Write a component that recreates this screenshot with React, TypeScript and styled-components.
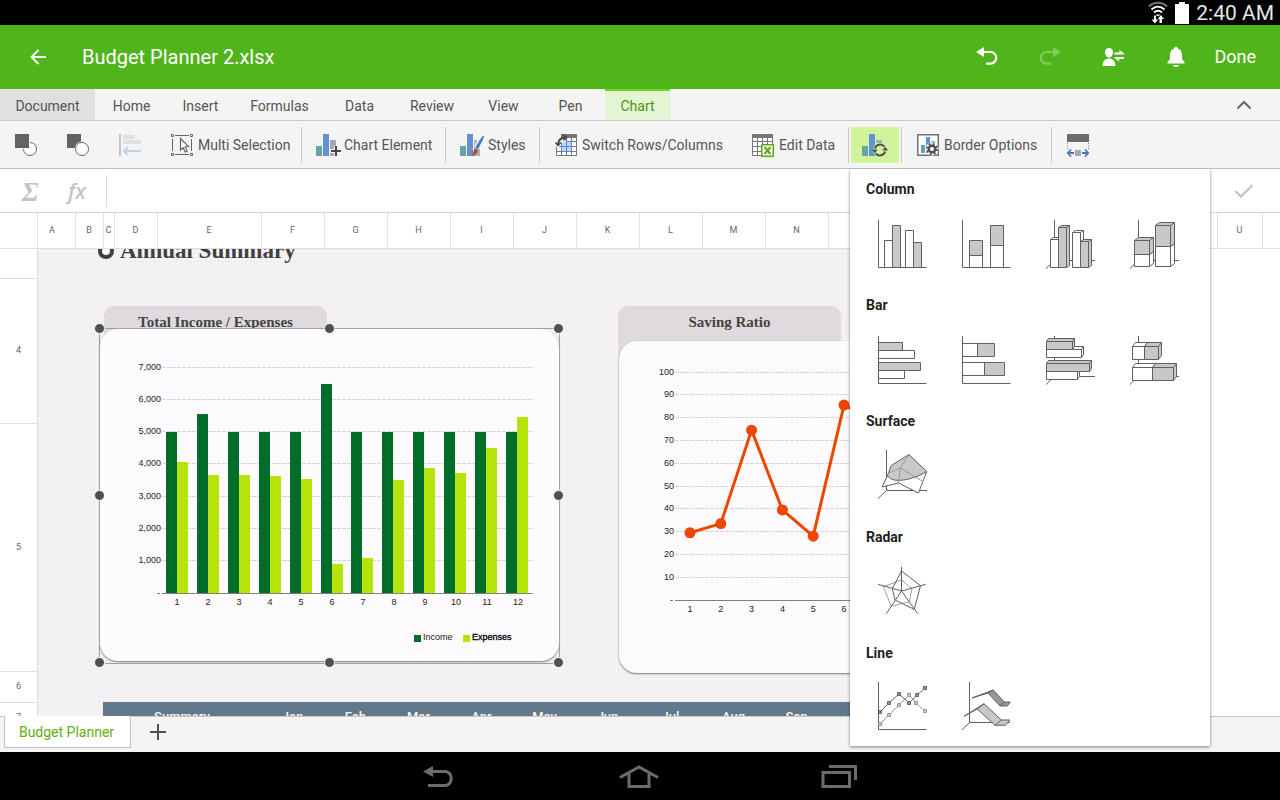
import React from 'react';
import styled, { createGlobalStyle, css } from 'styled-components';

const GlobalStyle = createGlobalStyle`
  *, *::before, *::after { box-sizing: border-box; }
  body {
    margin: 0;
    font-family: Roboto, "Liberation Sans", sans-serif;
    font-size: 14px;
    color: #555;
    background: #fff;
  }
  button {
    font: inherit;
    color: inherit;
    border: 0;
    padding: 0;
    background: none;
    cursor: pointer;
  }
  svg { display: block; flex: none; }
`;

/* ---------- frame ---------- */

const Page = styled.div`
  display: flex;
  flex-direction: column;
  height: 100vh;
  overflow: hidden;
`;

const StatusBar = styled.div`
  flex: none;
  display: flex;
  align-items: center;
  justify-content: flex-end;
  gap: 7px;
  height: 25px;
  padding-right: 6px;
  background: #000;
  color: #e6e6e6;
  font-size: 21px;
  line-height: 24px;
`;

const AppBar = styled.header`
  flex: none;
  display: flex;
  align-items: center;
  height: 64px;
  padding-right: 24px;
  background: #50b41b;
  color: #fff;
`;

const BackButton = styled.button`
  display: grid;
  place-items: center;
  width: 76px;
  height: 64px;
`;

const FileName = styled.h1`
  flex: 1;
  margin: 0;
  padding-left: 6px;
  font-size: 20px;
  line-height: 24px;
  font-weight: 400;
`;

const AppAction = styled.button`
  display: grid;
  place-items: center;
  width: 63px;
  height: 64px;
  &:disabled { opacity: 0.3; }
`;

const DoneButton = styled.button`
  padding-left: 7px;
  font-size: 18px;
  line-height: 24px;
`;

/* ---------- ribbon ---------- */

const TabBar = styled.nav`
  flex: none;
  display: flex;
  height: 32px;
  background: #f4f4f4;
  border-bottom: 1px solid #c8c8c8;
`;

const Tab = styled.button<{ $width: number; $state?: 'pressed' | 'active' }>`
  width: ${(p) => p.$width}px;
  padding-top: 2px;
  line-height: 28px;
  ${(p) => p.$state === 'pressed' && css`background: #e0e0e0;`}
  ${(p) =>
    p.$state === 'active' &&
    css`
      background: #e4f5d6;
      color: #4c960c;
      box-shadow: inset 0 2px #74d42c;
    `}
`;

const CollapseButton = styled.button`
  display: grid;
  place-items: center;
  width: 72px;
  margin-left: auto;
`;

const ToolBar = styled.div`
  flex: none;
  display: flex;
  align-items: center;
  height: 48px;
  background: #f4f4f4;
  border-bottom: 1px solid #c0c0c0;
`;

const ToolButton = styled.button<{ $width: number }>`
  display: flex;
  align-items: center;
  gap: 2px;
  width: ${(p) => p.$width}px;
  height: 36px;
  padding-left: 14px;
  white-space: nowrap;
`;

const ToolIconButton = styled.button<{ $active?: boolean }>`
  display: grid;
  place-items: center;
  width: ${(p) => (p.$active ? 48 : 52)}px;
  height: 36px;
  background: ${(p) => (p.$active ? '#d1f49a' : 'none')};
`;

const Separator = styled.div`
  width: 1px;
  height: 36px;
  background: #c8c8c8;
`;

const MenuAnchor = styled.div`
  position: relative;
  margin: 0 2px;
`;

const Menu = styled.div`
  position: absolute;
  z-index: 5;
  top: 42px;
  left: -1px;
  width: 360px;
  max-height: 577px;
  overflow: hidden;
  background: #fff;
  box-shadow: 0 1px 3px rgba(0, 0, 0, 0.5);
  clip-path: inset(0 -6px -6px -6px);
`;

const MenuSection = styled.section`
  padding: 0 12px 2px;
`;

const MenuTitle = styled.h2`
  margin: 0;
  padding-left: 4px;
  font-size: 14px;
  line-height: 40px;
  font-weight: 700;
  color: #222;
`;

const MenuGrid = styled.div`
  display: grid;
  grid-template-columns: repeat(4, 84px);
`;

const ChartTypeButton = styled.button`
  display: grid;
  place-items: center;
  height: 74px;
`;

/* ---------- formula bar ---------- */

const FormulaBar = styled.div`
  flex: none;
  display: flex;
  align-items: center;
  height: 44px;
  border-bottom: 1px solid #d8d8d8;
  color: #c4c4c4;
`;

const SumButton = styled.button`
  width: 60px;
  padding-top: 2px;
  font-family: "Liberation Serif", serif;
  font-size: 27px;
  line-height: 40px;
  font-style: italic;
  font-weight: 700;
`;

const FxButton = styled.button`
  width: 34px;
  font-family: "Open Sans", "Noto Sans", sans-serif;
  font-size: 21px;
  line-height: 40px;
  font-weight: 600;
  font-style: italic;
`;

const FormulaInput = styled.input`
  flex: 1;
  height: 32px;
  margin-left: 12px;
  padding: 0 8px;
  border: 0;
  border-left: 1px solid #d8d8d8;
  outline: 0;
  font: inherit;
  color: #333;
`;

const ConfirmButton = styled.button`
  display: grid;
  place-items: center;
  width: 72px;
`;

/* ---------- sheet ---------- */

const ColumnHeaders = styled.div`
  flex: none;
  display: flex;
  height: 36px;
  overflow: hidden;
  border-bottom: 1px solid #e0dfe0;
  font-size: 9px;
  line-height: 35px;
  color: #666;
`;

const Corner = styled.div`
  flex: none;
  width: 38px;
  border-right: 1px solid #e0dfe0;
  background: #fff;
  z-index: 1;
`;

const ColumnStrip = styled.div`
  display: flex;
  margin-left: -8px;
`;

const ColumnCell = styled.div<{ $width: number }>`
  flex: none;
  width: ${(p) => p.$width}px;
  padding-right: 1px;
  border-right: 1px solid #e0dfe0;
  text-align: center;
`;

const SheetBody = styled.div`
  flex: 1;
  display: flex;
  min-height: 0;
  overflow: hidden;
`;

const RowHeaders = styled.div`
  flex: none;
  width: 38px;
  border-right: 1px solid #e0dfe0;
  font-size: 9px;
  color: #666;
`;

const RowCell = styled.div<{ $height: number }>`
  display: grid;
  place-items: center;
  height: ${(p) => p.$height}px;
  padding-bottom: 2px;
  border-bottom: 1px solid #e0dfe0;
`;

const Dashboard = styled.main`
  flex: 1;
  overflow: hidden;
  padding-left: 62px;
  background-color: #f6f4f6;
  background-image:
    repeating-linear-gradient(90deg, #eeeced 0 1px, transparent 1px 4px),
    repeating-linear-gradient(#eeeced 0 1px, transparent 1px 4px);
`;

const BlankArea = styled.div`
  flex: none;
  width: 70px;
`;

const SummaryTitle = styled.h2`
  display: flex;
  align-items: center;
  gap: 6px;
  height: 73px;
  margin: -16px 0 0;
  padding-bottom: 38px;
  font-family: "Liberation Serif", serif;
  font-size: 23px;
  line-height: 28px;
  font-weight: 700;
  white-space: nowrap;
  color: #404040;
`;

const Ring = styled.span`
  width: 16px;
  height: 16px;
  margin-left: -2px;
  border: 4px solid #404040;
  border-radius: 50%;
  background: #fff;
`;

const Cards = styled.div`
  display: flex;
  gap: 60px;
`;

const CardColumn = styled.section`
  flex: none;
  width: 459px;
`;

const CardTab = styled.h3<{ $inset: number }>`
  width: 223px;
  height: 50px;
  margin: 0 0 0 ${(p) => p.$inset}px;
  padding-top: 6px;
  border-radius: 10px 10px 0 0;
  background: #dedadd;
  font-family: "Liberation Serif", serif;
  font-size: 15px;
  line-height: 20px;
  font-weight: 700;
  text-align: center;
  color: #444;
`;

const Card = styled.div<{ $overlap: number }>`
  position: relative;
  height: 332px;
  margin-top: -${(p) => p.$overlap}px;
  border-radius: 18px;
  background: #fefbfe;
  box-shadow: 0 1px 2px rgba(0, 0, 0, 0.5);
`;

const Selection = styled.div`
  position: absolute;
  inset: -1px -1px -3px -1px;
  border: 1px solid #a0a0a0;
`;

const Handle = styled.span<{ $x: number; $y: number }>`
  position: absolute;
  left: ${(p) => p.$x}%;
  top: ${(p) => p.$y}%;
  width: 11px;
  height: 11px;
  margin: -6px;
  border: 1px solid #fff;
  border-radius: 50%;
  background: #505050;
`;

const MonthTable = styled.table`
  table-layout: fixed;
  width: 914px;
  margin: 29px 0 0 3px;
  border-collapse: collapse;
  background: #62788c;
  color: #fff8e6;
  font-size: 13px;
`;

const MonthHead = styled.th<{ $width: number }>`
  width: ${(p) => p.$width}px;
  height: 29px;
  padding: 0;
  font-weight: 500;
`;

const SheetTabs = styled.div`
  flex: none;
  display: flex;
  height: 36px;
  padding-left: 4px;
  border-top: 1px solid #c8c8c8;
  background: #f4f4f4;
`;

const SheetTab = styled.button`
  width: 127px;
  height: 32px;
  margin-top: -1px;
  padding-right: 2px;
  border: 1px solid #c0c0c0;
  border-top: 0;
  background: #fff;
  color: #5eb010;
`;

const AddSheetButton = styled.button`
  display: grid;
  place-items: center;
  width: 54px;
  height: 30px;
`;

const NavBar = styled.nav`
  flex: none;
  display: flex;
  justify-content: center;
  height: 48px;
  padding-right: 2px;
  background: #000;
`;

const NavButton = styled.button`
  display: grid;
  place-items: center;
  width: 200px;
`;

/* ---------- toolbar icons ---------- */

const ToolSvg = ({ children }: { children: React.ReactNode }) => (
  <svg width="26" height="24" viewBox="0 0 26 24" fill="none">{children}</svg>
);

const MiniColumns = () => (
  <>
    <path fill="#64a5aa" d="M0 13h6v10H0z" />
    <path fill="#6492cd" d="M7 1h6v22H7z" />
  </>
);

const BringForwardIcon = () => (
  <ToolSvg>
    <circle cx="17" cy="16" r="6.5" fill="#fff" stroke="#666" />
    <path fill="#636363" stroke="#f4f4f4" strokeWidth="2" paintOrder="stroke" d="M2 1h14v14H2z" />
  </ToolSvg>
);

const SendBackwardIcon = () => (
  <ToolSvg>
    <path fill="#636363" d="M2 1h14v14H2z" />
    <circle cx="17" cy="16" r="7.5" fill="#f4f4f4" />
    <circle cx="17" cy="16" r="6.5" fill="#fff" stroke="#666" />
  </ToolSvg>
);

const AlignIcon = () => (
  <ToolSvg>
    <path fill="#c4c4c4" d="M2 1h2v22H2z" />
    <path fill="#dce0e4" d="M6 2h12v4H6zM6 7h18v4H6z" />
    <path stroke="#bcd0e6" strokeWidth="2" d="M24 18H7.500M11 14l-4 4 4 4" />
  </ToolSvg>
);

const MultiSelectIcon = () => (
  <ToolSvg>
    <path stroke="#666" d="M1.500 1.500h2v2h-2zM20.500 1.500h2v2h-2zM1.500 20.500h2v2h-2zM20.500 20.500h2v2h-2zM5 2.500h14M5 21.500h14M2.500 6v12M21.500 6v12" />
    <path stroke="#666" fill="#fff" strokeWidth="1.200" d="M10.500 5.500v11.500l2.700-2.300 2 4.300 1.900-.9-2-4.200 3.400-.3z" />
  </ToolSvg>
);

const ChartElementIcon = () => (
  <ToolSvg>
    <MiniColumns />
    <path fill="#a0aab4" d="M14 7h6v6h-2v3h-4zM14 20h4v3h-4z" />
    <path stroke="#444" strokeWidth="2" d="M15 18h10M20 13v10" />
  </ToolSvg>
);

const StylesIcon = () => (
  <ToolSvg>
    <MiniColumns />
    <path fill="#a8b2ba" d="M14 7h6v16h-6z" />
    <path stroke="#f4f4f4" strokeWidth="6" d="M23 3l-6 12" />
    <path fill="#4a78be" d="M24 3c.5.8-3.800 9.500-6 13l-2.500-1.700C17.500 10.500 22 3.300 23 3z" />
    <path fill="#c04a2c" d="M15.500 15.500l2.200 1.600c.4 3-2.700 6.400-6.400 5.900 2-1.500 1.300-6 4.200-7.500z" />
  </ToolSvg>
);

const GridLines = ({ x }: { x: number }) => (
  <g transform={`translate(${x} 0)`}>
    <path fill="#fff" d="M0 1h21v22H0z" />
    <path stroke="#777" d="M.5 4v18.500h20V4M5.500 4v18M10.500 4v18M15.500 4v18M0 8.500h21M0 13.500h21M0 18.500h21" />
    <path fill="#777" d="M0 1h21v4H0z" />
  </g>
);

const SwitchIcon = () => (
  <ToolSvg>
    <GridLines x={2} />
    <path fill="#bcd4fa" stroke="#5a86cc" d="M7.500 8.500h10v10h-10zM12.500 8.500v10M7.500 13.500h10" />
    <path fill="#f4f4f4" d="M1 1h6v5l5-1v4H8l-3 5H1z" />
    <path stroke="#444" strokeWidth="2" d="M4 12c0-5 2.500-7.500 8-7.500" />
    <path stroke="#444" strokeWidth="1.500" d="M1.500 9.500L4 12.500 7 9.500M9.500 1.500l3 3-3 3" />
  </ToolSvg>
);

const EditDataIcon = () => (
  <ToolSvg>
    <GridLines x={1} />
    <path fill="#fff" stroke="#5fa814" strokeWidth="1.500" d="M10.800 11.800h11.500v11.500H10.800z" />
    <path stroke="#5fa814" strokeWidth="2" d="M13.500 14l6 7M19.500 14l-6 7" />
  </ToolSvg>
);

const ChangeTypeIcon = () => (
  <ToolSvg>
    <MiniColumns />
    <path fill="#a0aab4" d="M14 7h6v3h-6z" />
    <circle cx="18" cy="17" r="7" fill="#d1f49a" />
    <path stroke="#505050" strokeWidth="2" d="M12.800 15.500a5.500 5.500 0 0 1 9.600-1.800M23.200 18.500a5.500 5.500 0 0 1-9.600 1.800" />
    <path fill="#505050" d="M9.800 16.500h6l-3 3.800zM20.200 17.500h6l-3-3.800z" />
  </ToolSvg>
);

const BorderOptionsIcon = () => (
  <ToolSvg>
    <path fill="#fff" stroke="#707070" strokeWidth="1.500" d="M1.800 1.800h20.500v20.500H1.800z" />
    <path fill="#64a5aa" d="M5 12h4v8H5z" />
    <path fill="#6492cd" d="M10 4h4v16h-4z" />
    <path fill="#a0aab4" d="M15 8h4v3h-4z" />
    <circle cx="16" cy="16" r="6.500" fill="#fff" />
    <circle cx="16" cy="16" r="3.300" stroke="#505050" strokeWidth="2.400" />
    <circle cx="16" cy="16" r="5.200" stroke="#505050" strokeWidth="1.800" strokeDasharray="2.040 2.040" />
  </ToolSvg>
);

const SizeIcon = () => (
  <ToolSvg>
    <path fill="#6c6c6c" d="M2 1h22v8H2z" />
    <path stroke="#777" strokeDasharray="1 1.500" d="M2.500 10v6M23.500 10v6" />
    <path fill="#a0aab4" d="M10 17h6v6h-6z" />
    <path stroke="#4e78b4" strokeWidth="1.800" d="M9 20H3M6 16.500L2.800 20 6 23.500M17 20h6M20 16.500l3.200 3.500-3.200 3.500" />
  </ToolSvg>
);

/* ---------- chart type icons ---------- */

const INK = '#606060';
const GREY = '#c8c8c8';

const TypeSvg = ({ children }: { children: React.ReactNode }) => (
  <svg width="52" height="56" viewBox="0 -2 52 56" fill="none" stroke={INK} strokeLinejoin="round">
    {children}
  </svg>
);

type Box = [x: number, y: number, w: number, h: number, fill?: string];

const Boxes = ({ items, dx = 0, dy = 0 }: { items: Box[]; dx?: number; dy?: number }) => (
  <>
    {items.map(([x, y, w, h, fill = '#fff'], i) => (
      <g key={i} fill={fill}>
        {dx > 0 && (
          <path d={`M${x} ${y}l${dx} ${-dy}h${w}v${h}l${-dx} ${dy}V${y}zM${x + w} ${y}l${dx} ${-dy}`} />
        )}
        <rect x={x} y={y} width={w} height={h} />
      </g>
    ))}
  </>
);

const FlatAxes = <path d="M.5 0v47.500h48" />;
const DeepAxes = <path d="M8.500 0v40.500H49M8.500 40.500L0 48.500" />;

const Marks = ({ points, fill, stroke }: { points: number[][]; fill: string; stroke: string }) => (
  <g stroke={stroke}>
    <polyline points={points.map((p) => p.join(',')).join(' ')} />
    {points.map(([x, y]) => (
      <rect key={x} x={x - 1.5} y={y - 1.5} width="3" height="3" fill={fill} />
    ))}
  </g>
);

const chartTypes: { title: string; items: { name: string; art: React.ReactNode }[] }[] = [
  {
    title: 'Column',
    items: [
      {
        name: 'Clustered column',
        art: (
          <>
            <Boxes items={[[6.5, 20.5, 8, 27], [14.5, 5.5, 8, 42, GREY], [27.5, 10.5, 8, 37], [35.5, 22.5, 8, 25, GREY]]} />
            {FlatAxes}
          </>
        ),
      },
      {
        name: 'Stacked column',
        art: (
          <>
            <Boxes items={[[7.5, 20.5, 13, 15, GREY], [7.5, 35.5, 13, 12], [28.5, 5.5, 13, 20, GREY], [28.5, 25.5, 13, 22]]} />
            {FlatAxes}
          </>
        ),
      },
      {
        name: '3-D clustered column',
        art: (
          <>
            {DeepAxes}
            <Boxes dx={3} dy={2} items={[[4.5, 19.5, 8, 28], [12.5, 7.5, 8, 40, GREY], [26.5, 12.5, 8, 35], [34.5, 21.5, 8, 26, GREY]]} />
          </>
        ),
      },
      {
        name: '3-D stacked column',
        art: (
          <>
            {DeepAxes}
            <Boxes dx={4} dy={3} items={[[4.5, 34.5, 15, 12], [4.5, 20.5, 15, 14, GREY], [25.5, 26.5, 15, 20], [25.5, 5.5, 15, 21, GREY]]} />
          </>
        ),
      },
    ],
  },
  {
    title: 'Bar',
    items: [
      {
        name: 'Clustered bar',
        art: (
          <>
            <Boxes items={[[0.5, 6.5, 24, 8, GREY], [0.5, 14.5, 36, 8], [0.5, 26.5, 42, 8, GREY], [0.5, 34.5, 26, 8]]} />
            {FlatAxes}
          </>
        ),
      },
      {
        name: 'Stacked bar',
        art: (
          <>
            <Boxes items={[[0.5, 7.5, 15, 13], [15.5, 7.5, 17, 13, GREY], [0.5, 26.5, 22, 13], [22.5, 26.5, 20, 13, GREY]]} />
            {FlatAxes}
          </>
        ),
      },
      {
        name: '3-D clustered bar',
        art: (
          <>
            {DeepAxes}
            <Boxes dx={2} dy={3} items={[[0.5, 13.5, 35, 8], [0.5, 5.5, 26, 8, GREY], [0.5, 35.5, 31, 8], [0.5, 27.5, 43, 8, GREY]]} />
          </>
        ),
      },
      {
        name: '3-D stacked bar',
        art: (
          <>
            {DeepAxes}
            <Boxes dx={3} dy={4} items={[[2.5, 10.5, 12, 13], [14.5, 10.5, 14, 13, GREY], [2.5, 31.5, 20, 13], [22.5, 31.5, 21, 13, GREY]]} />
          </>
        ),
      },
    ],
  },
  {
    title: 'Surface',
    items: [
      {
        name: 'Surface',
        art: (
          <>
            <path d="M8.500-2v40.500H49M8.500 38.500L0 46.500" />
            <path fill="#fff" d="M9.500 23.500L4 35l16.500-4 20 10 8.200-21.500z" />
            <path fill={GREY} d="M9.500 23.500l3.800-10L31 2.500l17.700 17c-10 6.500-34 14-39.200 4z" />
            <path stroke="#989898" d="M31 2.500L22.300 16 20.300 31M9.500 21.500L22.300 16 44 29" />
          </>
        ),
      },
    ],
  },
  {
    title: 'Radar',
    items: [
      {
        name: 'Radar',
        art: (
          <>
            <path stroke="#a0a0a0" d="M23.500 12L34 20.700l-2.700 13-18 4.600-8-19.600z" />
            <path d="M23.500 3l19 14.700-6.200 23.600L17 32l-2.700-11.300z" />
            <path d="M23.500-1v24L0 16.300M23.500 23l24.200-6.700M23.500 23L8.300 45.700M23.500 23l16.200 22.700" />
          </>
        ),
      },
    ],
  },
  {
    title: 'Line',
    items: [
      {
        name: 'Line with markers',
        art: (
          <>
            <path d="M.5-2v47.500h48" />
            <Marks stroke="#989898" fill={GREY} points={[[2, 40], [11, 31], [21, 21], [31, 11], [38, 19], [47, 27]]} />
            <Marks stroke={INK} fill="#989898" points={[[2, 28], [11, 19], [21, 10], [31, 19], [39, 11], [47, 4]]} />
          </>
        ),
      },
      {
        name: '3-D line',
        art: (
          <>
            <path d="M7.500-2v40.500H48M7.500 38.500L-.5 46.500" />
            <path fill="#989898" d="M10 14l21.300-8 11 12h6l-3 4H38L26 9z" />
            <path d="M26 9l5.300-3M38 22l4.300-4" />
            <path fill={GREY} d="M2 32.300l20-12.600L39.300 36H48l-4.700 5.300H33L15.300 25z" />
            <path d="M15.300 25l6.700-5.300M33 41.300l6.300-5.300" />
          </>
        ),
      },
    ],
  },
];

/* ---------- charts ---------- */

const income = [5000, 5550, 5000, 5000, 5000, 6480, 5000, 5000, 5000, 5000, 5000, 5000];
const expenses = [4030, 3650, 3650, 3620, 3530, 870, 1060, 3500, 3870, 3690, 4490, 5450];

const chartFont = '"Liberation Sans", sans-serif';

const IncomeChart = () => {
  const y = (v: number) => Math.floor(264.1 - v * 0.0323);
  return (
    <svg width="459" height="332" viewBox="0 0 459 332" fontFamily={chartFont} fontSize="9" fill="#222">
      {[1, 2, 3, 4, 5, 6, 7].map((k) => (
        <React.Fragment key={k}>
          <path stroke="#d8d4d8" strokeDasharray="4 1" d={`M62 ${y(k * 1000) + 0.5}h371`} />
          <text x="61" y={y(k * 1000) + 3} textAnchor="end">{`${k},000`}</text>
        </React.Fragment>
      ))}
      <text x="60" y="267" textAnchor="end">-</text>
      {income.map((v, i) => {
        const x = 66 + Math.round(i * 30.9);
        return (
          <React.Fragment key={i}>
            <rect x={x} y={y(v) + 1} width="11" height={263 - y(v)} fill="#006e28" />
            <rect x={x + 11} y={y(expenses[i])} width="11" height={264 - y(expenses[i])} fill="#b4e40a" />
            <text x={77 + i * 31} y="276" textAnchor="middle">{i + 1}</text>
          </React.Fragment>
        );
      })}
      <path stroke="#808080" d="M62 264.500h371" />
      <path fill="#006e28" d="M314 306h7v7h-7z" />
      <text x="323" y="311">Income</text>
      <path fill="#b4e40a" d="M363 306h7v7h-7z" />
      <text x="372" y="311" fill="#000" stroke="#000" strokeWidth="0.300">Expenses</text>
    </svg>
  );
};

const ratios = [29.5, 33.5, 74.5, 39.5, 28, 85.5, 79, 60, 48, 57, 44, 52];

const RatioChart = () => {
  const y = (v: number) => 259 - v * 2.28;
  const x = (i: number) => 71 + i * 30.8;
  return (
    <svg width="459" height="332" viewBox="0 0 459 332" fontFamily={chartFont} fontSize="9" fill="#222">
      {[10, 20, 30, 40, 50, 60, 70, 80, 90, 100].map((v) => (
        <React.Fragment key={v}>
          <path stroke="#d8d4d8" strokeDasharray="4 1" d={`M56 ${Math.floor(y(v)) + 0.5}h377`} />
          <text x="55" y={Math.floor(y(v)) + 3} textAnchor="end">{v}</text>
        </React.Fragment>
      ))}
      <text x="54" y="262" textAnchor="end">-</text>
      <path stroke="#808080" d="M56 259.500h377" />
      <polyline
        fill="none"
        stroke="#ee4500"
        strokeWidth="3"
        points={ratios.map((v, i) => `${x(i)},${y(v)}`).join(' ')}
      />
      {ratios.map((v, i) => (
        <React.Fragment key={i}>
          <circle cx={x(i)} cy={y(v)} r="5.500" fill="#ee4500" />
          <text x={x(i)} y="271" textAnchor="middle">{i + 1}</text>
        </React.Fragment>
      ))}
    </svg>
  );
};

/* ---------- data ---------- */

const tabs: [string, number][] = [
  ['Document', 95], ['Home', 73], ['Insert', 65], ['Formulas', 93], ['Data', 67],
  ['Review', 78], ['View', 65], ['Pen', 69], ['Chart', 65],
];

const columns: [string, number][] = [
  ['A', 46], ['B', 28], ['C', 11], ['D', 43], ['E', 104],
  ...'FGHIJKLMNOPQRS'.split('').map((c): [string, number] => [c, 63]),
  ['T', 74], ['U', 45],
];

const rows: [string, number][] = [['', 30], ['4', 145], ['5', 248], ['6', 31], ['7', 31]];

const months = ['Jan', 'Feb', 'Mar', 'Apr', 'May', 'Jun', 'Jul', 'Aug', 'Sep', 'Oct', 'Nov', 'Dec'];

const handles = [[0, 0], [50, 0], [100, 0], [0, 50], [100, 50], [0, 100], [50, 100], [100, 100]];

/* ---------- page ---------- */

export default function App() {
  return (
    <Page>
      <GlobalStyle />
      <StatusBar>
        <svg width="20" height="23" viewBox="0 0 20 23" fill="none">
          <path stroke="#777" strokeWidth="2" d="M1 5.500c5-5 13-5 18 0" />
          <path stroke="#fff" strokeWidth="2" d="M3.500 8.500c4-3.600 9-3.600 13 0M6 11.500c2.600-2.200 5.400-2.200 8 0" />
          <path fill="#fff" d="M7.500 13.500h5L10 15.500zM6 14.500h2v4h2l-3 4-3.500-4H6zM11.500 22v-4H9.800l3.200-4 3 4h-2v4z" />
        </svg>
        <svg width="14" height="22" viewBox="0 0 14 22" fill="#fff">
          <path d="M4 0h6v2h4v20H0V2h4z" />
        </svg>
        <span>2:40 AM</span>
      </StatusBar>

      <AppBar>
        <BackButton aria-label="Back">
          <svg width="16" height="16" viewBox="0 0 16 16" fill="none" stroke="#fff" strokeWidth="2">
            <path d="M16 8H1.500M8.500 1L1.500 8l7 7" />
          </svg>
        </BackButton>
        <FileName>Budget Planner 2.xlsx</FileName>
        <AppAction aria-label="Undo">
          <svg width="22" height="20" viewBox="0 0 22 20" fill="none">
            <path stroke="#fff" strokeWidth="2.200" d="M6 5h8.500a5.800 5.800 0 0 1 0 11.600H10" />
            <path fill="#fff" d="M0 5l8-5v10z" />
          </svg>
        </AppAction>
        <AppAction aria-label="Redo" disabled>
          <svg width="22" height="20" viewBox="0 0 22 20" fill="none">
            <path stroke="#fff" strokeWidth="2.200" d="M14 5H7.500a5.800 5.800 0 0 0 0 11.600H12" />
            <path fill="#fff" d="M22 5l-8-5v10z" />
          </svg>
        </AppAction>
        <AppAction aria-label="Share">
          <svg width="22" height="20" viewBox="0 0 22 20" fill="#fff">
            <path d="M7 1c2.600 0 4 1.800 4 4.200S9.600 10.500 7 10.500 3 7.600 3 5.200 4.400 1 7 1zM.5 19c0-4.500 2.500-7.500 6.500-7.500s6.500 3 6.500 7.500z" />
            <path d="M12.500 5.500h5V3l4.500 3.500v1h-9.500zM22 12h-5v2.500L12.500 11v-1H22z" />
          </svg>
        </AppAction>
        <AppAction aria-label="Notifications">
          <svg width="18" height="20" viewBox="0 0 18 20" fill="#fff">
            <path d="M9 0c1.200 0 2 .8 2 1.700 2.700.8 4 3 4 6V12l2.500 3v1.500H.5V15L3 12V7.700c0-3 1.300-5.200 4-6C7 .8 7.800 0 9 0zM6 18h6c-.5 1.300-1.500 2-3 2s-2.500-.7-3-2z" />
          </svg>
        </AppAction>
        <DoneButton>Done</DoneButton>
      </AppBar>

      <TabBar>
        {tabs.map(([name, width]) => (
          <Tab
            key={name}
            $width={width}
            $state={name === 'Document' ? 'pressed' : name === 'Chart' ? 'active' : undefined}
          >
            {name}
          </Tab>
        ))}
        <CollapseButton aria-label="Collapse ribbon">
          <svg width="16" height="10" viewBox="0 0 16 10" fill="none" stroke="#666" strokeWidth="2">
            <path d="M1.500 8.500L8 2l6.500 6.500" />
          </svg>
        </CollapseButton>
      </TabBar>

      <ToolBar>
        <ToolIconButton aria-label="Bring forward"><BringForwardIcon /></ToolIconButton>
        <ToolIconButton aria-label="Send backward"><SendBackwardIcon /></ToolIconButton>
        <ToolIconButton aria-label="Align" disabled><AlignIcon /></ToolIconButton>
        <ToolButton $width={145}><MultiSelectIcon />Multi Selection</ToolButton>
        <Separator />
        <ToolButton $width={143}><ChartElementIcon />Chart Element</ToolButton>
        <Separator />
        <ToolButton $width={93}><StylesIcon />Styles</ToolButton>
        <Separator />
        <ToolButton $width={197}><SwitchIcon />Switch Rows/Columns</ToolButton>
        <ToolButton $width={111}><EditDataIcon />Edit Data</ToolButton>
        <Separator />
        <MenuAnchor>
          <ToolIconButton $active aria-label="Change chart type" aria-expanded="true"><ChangeTypeIcon /></ToolIconButton>
          <Menu>
            {chartTypes.map((section) => (
              <MenuSection key={section.title}>
                <MenuTitle>{section.title}</MenuTitle>
                <MenuGrid>
                  {section.items.map((item) => (
                    <ChartTypeButton key={item.name} aria-label={item.name}>
                      <TypeSvg>{item.art}</TypeSvg>
                    </ChartTypeButton>
                  ))}
                </MenuGrid>
              </MenuSection>
            ))}
          </Menu>
        </MenuAnchor>
        <Separator />
        <ToolButton $width={149}><BorderOptionsIcon />Border Options</ToolButton>
        <Separator />
        <ToolIconButton aria-label="Size"><SizeIcon /></ToolIconButton>
      </ToolBar>

      <FormulaBar>
        <SumButton aria-label="Sum">Σ</SumButton>
        <FxButton aria-label="Insert function">fx</FxButton>
        <FormulaInput aria-label="Formula" />
        <ConfirmButton aria-label="Confirm">
          <svg width="20" height="14" viewBox="0 0 20 14" fill="none" stroke="#c4c4c4" strokeWidth="2.400">
            <path d="M1.500 7l5.500 5.500L18.500 1" />
          </svg>
        </ConfirmButton>
      </FormulaBar>

      <ColumnHeaders>
        <Corner />
        <ColumnStrip>
          {columns.map(([name, width]) => (
            <ColumnCell key={name} $width={width}>{name}</ColumnCell>
          ))}
        </ColumnStrip>
      </ColumnHeaders>

      <SheetBody>
        <RowHeaders>
          {rows.map(([name, height]) => (
            <RowCell key={name} $height={height}>{name}</RowCell>
          ))}
        </RowHeaders>
        <Dashboard>
          <SummaryTitle><Ring />Annual Summary</SummaryTitle>
          <Cards>
            <CardColumn>
              <CardTab $inset={4}>Total Income / Expenses</CardTab>
              <Card $overlap={27}>
                <IncomeChart />
                <Selection>
                  {handles.map(([x, y]) => (
                    <Handle key={`${x}-${y}`} $x={x} $y={y} />
                  ))}
                </Selection>
              </Card>
            </CardColumn>
            <CardColumn>
              <CardTab $inset={-1}>Saving Ratio</CardTab>
              <Card $overlap={15}>
                <RatioChart />
              </Card>
            </CardColumn>
          </Cards>
          <MonthTable>
            <thead>
              <tr>
                <MonthHead $width={158}>Summary</MonthHead>
                {months.map((m) => (
                  <MonthHead key={m} $width={63}>{m}</MonthHead>
                ))}
              </tr>
            </thead>
          </MonthTable>
        </Dashboard>
        <BlankArea />
      </SheetBody>

      <SheetTabs>
        <SheetTab>Budget Planner</SheetTab>
        <AddSheetButton aria-label="Add sheet">
          <svg width="16" height="16" viewBox="0 0 16 16" fill="none" stroke="#505050" strokeWidth="2">
            <path d="M0 8h16M8 0v16" />
          </svg>
        </AddSheetButton>
      </SheetTabs>

      <NavBar>
        <NavButton aria-label="Back">
          <svg width="34" height="24" viewBox="0 0 34 24" fill="none">
            <path stroke="#6c6c6c" strokeWidth="3" d="M10 7.500h14a7.300 7.300 0 0 1 0 14H6" />
            <path fill="#6c6c6c" d="M1 7.500L11 2v11z" />
          </svg>
        </NavButton>
        <NavButton aria-label="Home">
          <svg width="40" height="24" viewBox="0 0 40 24" fill="none" stroke="#6c6c6c" strokeWidth="3">
            <path d="M1 13.500L20 3l19 10.500M10 10v12.500h20V10" />
          </svg>
        </NavButton>
        <NavButton aria-label="Recent apps">
          <svg width="36" height="24" viewBox="0 0 36 24" fill="none" stroke="#6c6c6c" strokeWidth="3">
            <path d="M2 8.500h26.500v14H2zM8 2.500h26.500V16" />
          </svg>
        </NavButton>
      </NavBar>
    </Page>
  );
}
